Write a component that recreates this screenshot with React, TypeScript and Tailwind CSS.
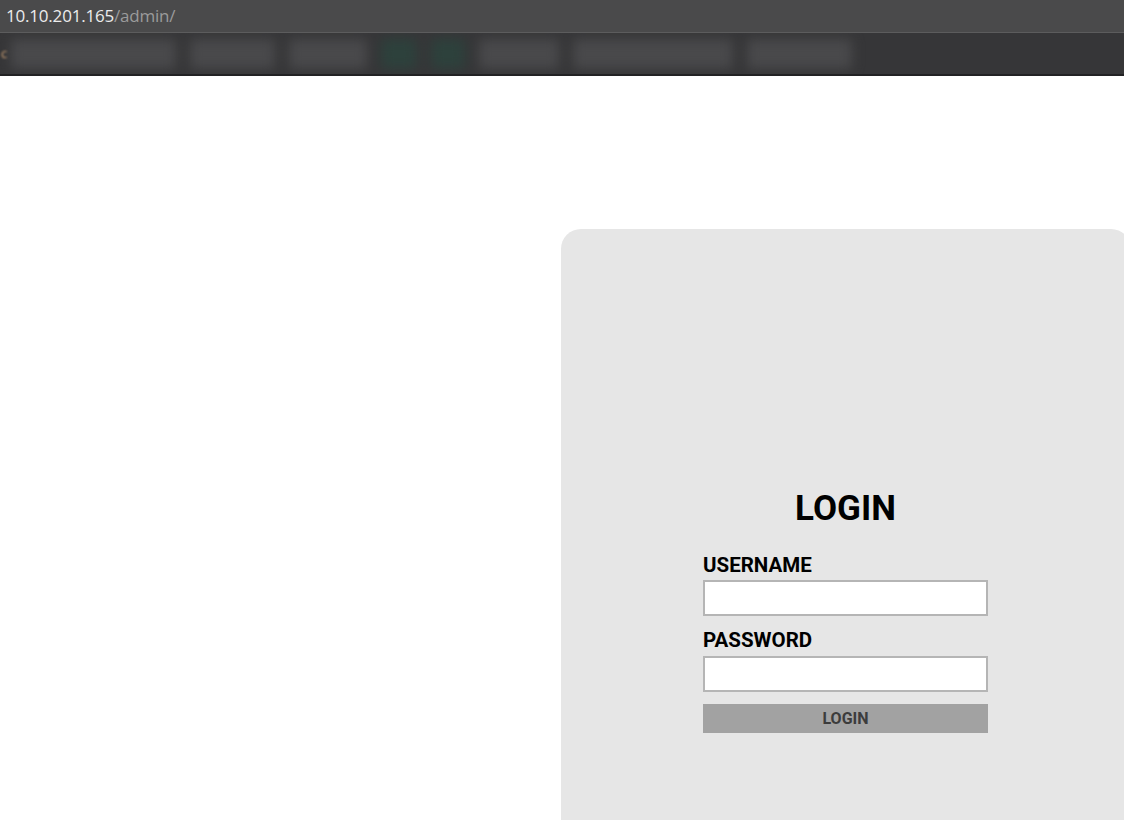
import React from 'react';

const bookmarks = [
  { w: 165, green: false },
  { w: 85, green: false },
  { w: 78, green: false },
  { w: 36, green: true },
  { w: 34, green: true },
  { w: 80, green: false },
  { w: 160, green: false },
  { w: 105, green: false },
];

export default function App() {
  return (
    <div className="min-h-screen w-full overflow-hidden bg-white" style={{ height: 820 }}>
      {/* Browser chrome */}
      <div className="bg-[#4a4a4b] h-[33px] flex items-center px-[6px] border-b border-[#5c5c5d]">
        <span className="text-[17px] text-[#ececec] font-['Open_Sans',sans-serif] tracking-[-0.2px]">
          10.10.201.165<span className="text-[#9b9b9b]">/admin/</span>
        </span>
      </div>
      <div className="bg-[#363638] h-[43px] flex items-center border-b-2 border-[#222224] overflow-hidden">
        <span className="text-[13px] text-[#d9a878] font-['Open_Sans',sans-serif] ml-[1px] mr-[4px] blur-[1px]">c</span>
        <div className="flex items-center gap-[14px] blur-[6px]">
          {bookmarks.map((b, i) => (
            <div
              key={i}
              className={b.green ? 'h-[30px] rounded bg-[#2d413c]' : 'h-[30px] rounded bg-[#49494b]'}
              style={{ width: b.w }}
            />
          ))}
        </div>
      </div>

      {/* Page */}
      <div className="font-['Roboto',sans-serif]">
        <div className="ml-[561px] mt-[153px] w-[570px] h-[700px] bg-[#e6e6e6] rounded-t-[20px] pt-[260px]">
          <div className="w-[285px] ml-[142px] flex flex-col">
            <h1 className="text-[35px] leading-[40px] font-bold text-black text-center">LOGIN</h1>
            <label className="mt-[24px] text-[20.5px] leading-[24px] font-bold text-black">USERNAME</label>
            <input className="mt-[3px] h-[36px] bg-white border-2 border-[#b5b5b5] outline-none" />
            <label className="mt-[12px] text-[20.5px] leading-[24px] font-bold text-black">PASSWORD</label>
            <input type="password" className="mt-[4px] h-[36px] bg-white border-2 border-[#b5b5b5] outline-none" />
            <button className="mt-[12px] h-[29px] bg-[#a2a2a2] text-[16px] font-bold text-[#3c3c3c] leading-none">
              LOGIN
            </button>
          </div>
        </div>
      </div>
    </div>
  );
}
